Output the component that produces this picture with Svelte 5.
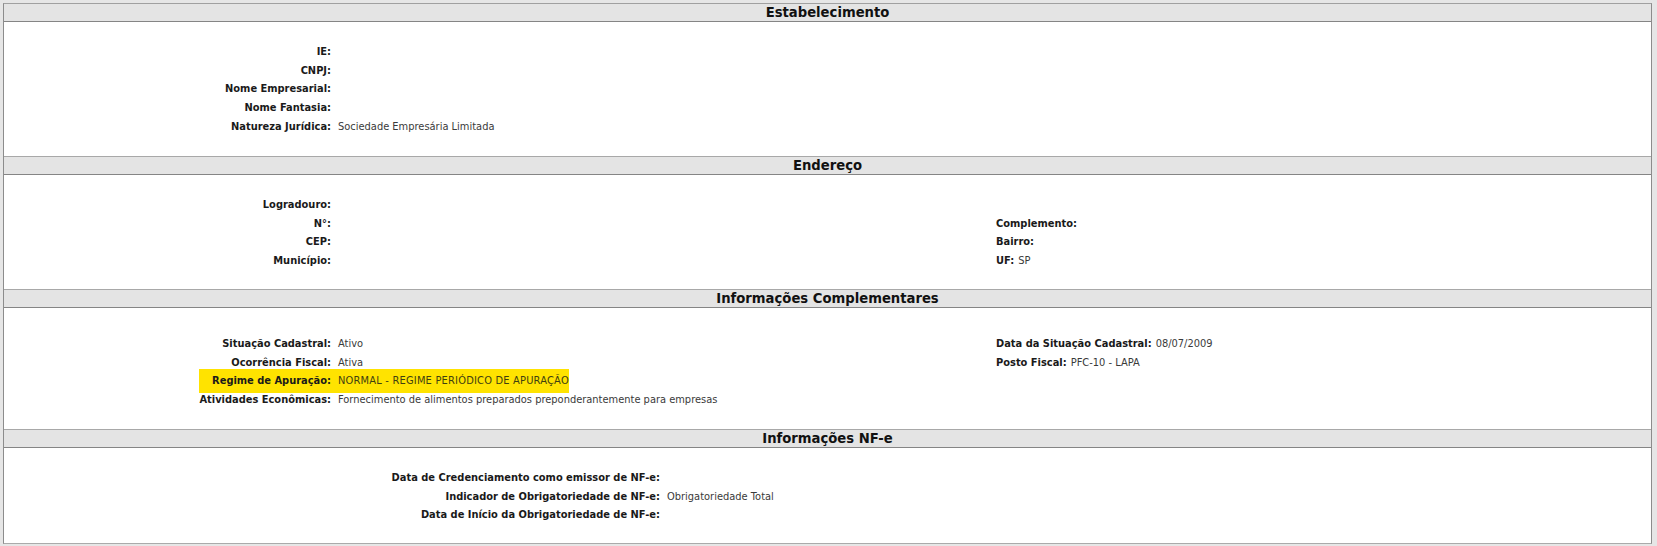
<script>
  const sections = [
    { title: 'Estabelecimento', height: 152, pad: 20, rows: [
      [['IE:', ''], null], [['CNPJ:', ''], null], [['Nome Empresarial:', ''], null], [['Nome Fantasia:', ''], null],
      [['Natureza Jurídica:', 'Sociedade Empresária Limitada'], null]
    ]},
    { title: 'Endereço', height: 133, pad: 20, rows: [
      [['Logradouro:', ''], null], [['N°:', ''], ['Complemento:', '']], [['CEP:', ''], ['Bairro:', '']], [['Município:', ''], ['UF:', 'SP']]
    ]},
    { title: 'Informações Complementares', height: 140, pad: 26, rows: [
      [['Situação Cadastral:', 'Ativo'], ['Data da Situação Cadastral:', '08/07/2009']],
      [['Ocorrência Fiscal:', 'Ativa'], ['Posto Fiscal:', 'PFC-10 - LAPA']],
      [['Regime de Apuração:', 'NORMAL - REGIME PERIÓDICO DE APURAÇÃO', true], null],
      [['Atividades Econômicas:', 'Fornecimento de alimentos preparados preponderantemente para empresas'], null]
    ]},
    { title: 'Informações NF-e', height: 115, pad: 20, wide: true, rows: [
      [['Data de Credenciamento como emissor de NF-e:', ''], null],
      [['Indicador de Obrigatoriedade de NF-e:', 'Obrigatoriedade Total'], null],
      [['Data de Início da Obrigatoriedade de NF-e:', ''], null]
    ]}
  ];
</script>

<div class="box">
  {#each sections as s}
    <section class="section" style="height: {s.height}px">
      <h2>{s.title}</h2>
      <div class="rows" class:wide={s.wide} style="padding-top: {s.pad}px">
        {#each s.rows as [left, right]}
          <div class="row">
            {#if left[2]}
              <div class="mark">
                <span class="label markl">{left[0]}</span>
                <span class="val">{left[1]}</span>
              </div>
            {:else}
              <div class="left">
                <span class="label lw">{left[0]}</span>
                <span class="val">{left[1]}</span>
              </div>
            {/if}
            {#if right}
              <div class="right">
                <span class="label">{right[0]}</span>
                <span class="val">{right[1]}</span>
              </div>
            {/if}
          </div>
        {/each}
      </div>
    </section>
  {/each}
</div>

<style>
  :global(body) {
    margin: 0;
    background: #e6e6e6;
    font-family: "DejaVu Sans", Verdana, sans-serif;
  }
  .box {
    box-sizing: border-box;
    width: 1649px;
    height: 541px;
    margin: 3px 0 0 3px;
    background: #fff;
    border: 1px solid #8c8c8c;
    border-top: 1px solid #a0a0a0;
    border-bottom: 1px solid #aaa;
  }
  .section {
    box-sizing: border-box;
    border-top: 1px solid #a8a8a8;
    overflow: hidden;
  }
  .section:first-child { border-top: 0; }
  h2 {
    margin: 0;
    height: 18px;
    box-sizing: border-box;
    background: #e4e4e4;
    border-bottom: 1px solid #858585;
    text-align: center;
    font-size: 13.2px;
    line-height: 18px;
    font-weight: bold;
    color: #111;
  }
  .row {
    display: flex;
    height: 18.75px;
    align-items: center;
    font-size: 9.9px;
    white-space: nowrap;
  }
  .left { width: 992px; display: flex; flex: none; }
  .lw { width: 327px; text-align: right; flex: none; }
  .wide .lw { width: 656px; }
  .mark {
    display: flex;
    align-items: center;
    box-sizing: border-box;
    width: 370px;
    height: 24px;
    margin: 0 427px 0 195px;
    background: #ffe300;
    flex: none;
  }
  .markl { width: 132px; text-align: right; flex: none; }
  .mark .val { letter-spacing: 0.2px; color: #3f3f10; }
  .label { font-weight: bold; color: #1a1a1a; }
  .val { color: #3a3a3a; margin-left: 7px; font-size: 9.9px; }
  .right { display: flex; }
  .right .val { margin-left: 4px; }
</style>
